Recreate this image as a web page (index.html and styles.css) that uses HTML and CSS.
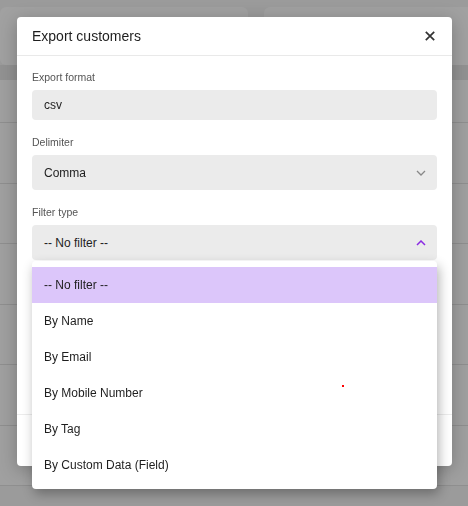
FILE: index.html
```html
<!doctype html>
<html lang="en">
<head>
  <meta charset="utf-8">
  <title>Export customers</title>
  <link rel="stylesheet" href="styles.css">
</head>
<body>
  <div class="page">
    <div class="cards">
      <div class="card"></div>
      <div class="card wide"></div>
    </div>
    <div class="table">
      <div class="thead"></div>
      <div class="row first"></div>
      <div class="row"></div>
      <div class="row"></div>
      <div class="row"></div>
      <div class="row"></div>
      <div class="row"></div>
      <div class="row"></div>
    </div>
  </div>
  <div class="overlay"></div>

  <div class="modal">
    <div class="modalHeader">
      <span class="modalTitle">Export customers</span>
      <svg class="closeIcon" width="10" height="10" viewBox="0 0 10 10">
        <path d="M0.8 0.8 L9.2 9.2 M9.2 0.8 L0.8 9.2" stroke="#333" stroke-width="1.7" fill="none"/>
      </svg>
    </div>
    <div class="modalBody">
      <div class="field">
        <label>Export format</label>
        <div class="input">csv</div>
      </div>
      <div class="field">
        <label>Delimiter</label>
        <div class="select">
          <span>Comma</span>
          <svg width="10" height="6" viewBox="0 0 10 6">
            <polyline points="1,1 5,5 9,1" stroke="#888" stroke-width="1.3" fill="none"/>
          </svg>
        </div>
      </div>
      <div class="field">
        <label>Filter type</label>
        <div class="selectWrap">
          <div class="select">
            <span>-- No filter --</span>
            <svg width="10" height="6" viewBox="0 0 10 6">
              <polyline points="1,5 5,1 9,5" stroke="#8a2be2" stroke-width="1.5" fill="none"/>
            </svg>
          </div>
          <ul class="menu">
            <li class="selected">-- No filter --</li>
            <li>By Name</li>
            <li>By Email</li>
            <li>By Mobile Number</li>
            <li>By Tag</li>
            <li>By Custom Data (Field)</li>
          </ul>
        </div>
      </div>
    </div>
    <div class="modalFooter"></div>
  </div>
  <div class="dot"></div>
</body>
</html>
```

FILE: styles.css
```css
body {
  margin: 0;
  font-family: "Liberation Sans", Arial, sans-serif;
  background: #f5f5f5;
  overflow: hidden;
}
.page {
  height: 506px;
}
.cards {
  display: flex;
  gap: 16px;
  padding-top: 7px;
}
.card {
  width: 248px;
  height: 58px;
  background: #fff;
  border-radius: 6px;
}
.card.wide {
  flex: 1;
  margin-right: -20px;
}
.thead {
  height: 15px;
  background: #e8e8e8;
}
.row {
  height: 59.5px;
  border-bottom: 1px solid #e2e2e2;
  background: #fdfdfd;
}
.row.first {
  height: 42px;
}
.overlay {
  position: fixed;
  top: 0;
  left: 0;
  right: 0;
  bottom: 0;
  background: rgba(0, 0, 0, 0.37);
}
.modal {
  position: absolute;
  left: 17px;
  top: 17px;
  width: 435px;
  height: 449px;
  background: #fff;
  border-radius: 4px;
  box-shadow: 0 4px 18px rgba(0, 0, 0, 0.25);
  display: flex;
  flex-direction: column;
}
.modalHeader {
  height: 38px;
  padding: 0 17px 0 15px;
  border-bottom: 1px solid #e9e9e9;
  display: flex;
  align-items: center;
  justify-content: space-between;
}
.modalTitle {
  font-size: 14px;
  color: #1e1e1e;
}
.modalBody {
  flex: 1;
  padding: 14px 15px 0;
}
.field {
  margin-bottom: 15px;
}
.field label {
  display: block;
  font-size: 10.5px;
  color: #555;
  line-height: 14px;
  margin-bottom: 6px;
}
.input {
  height: 30px;
  background: #ebebeb;
  border-radius: 4px;
  padding: 0 12px;
  display: flex;
  align-items: center;
  font-size: 12px;
  color: #1e1e1e;
}
.select {
  height: 35px;
  background: #ebebeb;
  border-radius: 4px;
  padding: 0 11px 0 12px;
  display: flex;
  align-items: center;
  justify-content: space-between;
  font-size: 12px;
  color: #1e1e1e;
}
.selectWrap {
  position: relative;
}
.menu {
  position: absolute;
  top: 36px;
  left: 0;
  right: 0;
  margin: 0;
  padding: 6px 0;
  list-style: none;
  background: #fff;
  border-radius: 4px;
  box-shadow: 2px 5px 12px rgba(0, 0, 0, 0.3);
  z-index: 2;
}
.menu li {
  height: 36px;
  line-height: 36px;
  padding: 0 12px;
  font-size: 12px;
  color: #1e1e1e;
}
.menu li.selected {
  background: #dcc6fa;
}
.modalFooter {
  height: 51px;
  border-top: 1px solid #ececec;
}
.dot {
  position: absolute;
  left: 342px;
  top: 385px;
  width: 2px;
  height: 2px;
  background: #ff0000;
  z-index: 3;
}
```
